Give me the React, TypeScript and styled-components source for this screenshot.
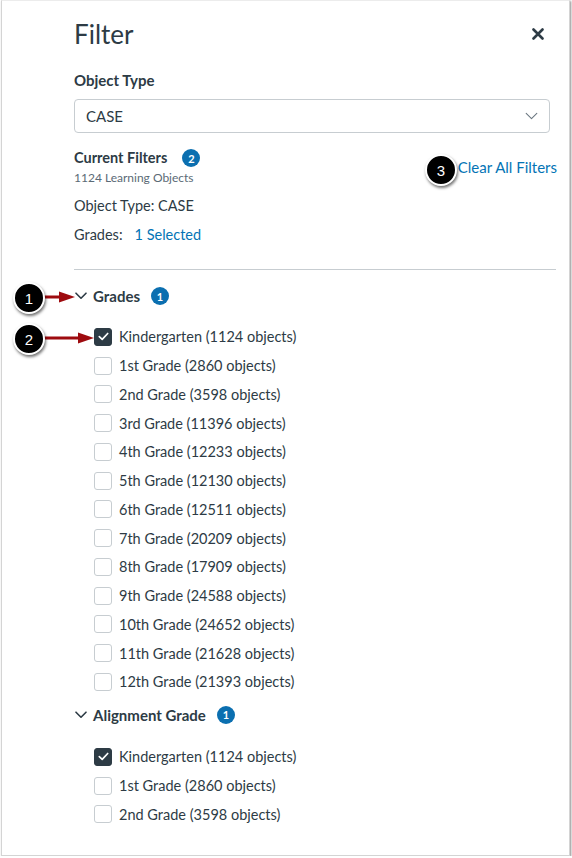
import React from "react";
import styled, { createGlobalStyle } from "styled-components";

const Global = createGlobalStyle`
  html, body { margin: 0; padding: 0; background: #ffffff; }
  body { font-family: Lato, "Open Sans", "Liberation Sans", sans-serif; color: #2d3b45; }
  * { box-sizing: border-box; }
`;

const Frame = styled.div`
  position: relative;
  width: 569px;
  height: 856px;
  margin-left: 1px;
  background: #fff;
  border: 1px solid #d4d4d4;
  border-top-color: #ececec;
  box-shadow: 1px 1px 2px rgba(0, 0, 0, 0.45);
  overflow: hidden;
`;

const Content = styled.div`
  padding: 0 13px 0 72px;
  display: flex;
  flex-direction: column;
`;

const Header = styled.div`
  height: 68px;
  display: flex;
  align-items: center;
  justify-content: space-between;
  padding-right: 11px;
`;

const Title = styled.h1`
  margin: -3px 0 0 0;
  font-size: 26px;
  font-weight: 400;
  line-height: 34px;
  color: #2d3b45;
`;

const CloseButton = styled.button`
  border: 0;
  background: none;
  padding: 0;
  width: 14px;
  height: 14px;
  margin-top: -2px;
  display: flex;
  align-items: center;
  justify-content: center;
  cursor: pointer;
`;

const Label = styled.div`
  font-size: 15px;
  font-weight: 700;
  line-height: 22px;
  height: 22px;
  margin-top: 0;
`;

const Select = styled.div`
  margin-top: 8px;
  margin-right: 6px;
  height: 34px;
  border: 1px solid #c7cdd1;
  border-radius: 4px;
  display: flex;
  align-items: center;
  justify-content: space-between;
  padding: 0 11px 0 11px;
  font-size: 15px;
`;

const FiltersRow = styled.div`
  margin-top: 15px;
  display: flex;
  justify-content: space-between;
  align-items: flex-start;
`;

const FiltersInfo = styled.div`
  display: flex;
  flex-direction: column;
`;

const HeadingLine = styled.div<{ $gap: number; $size?: number }>`
  display: flex;
  align-items: center;
  gap: ${(p) => p.$gap}px;
  font-weight: 700;
  font-size: ${(p) => p.$size ?? 15}px;
  line-height: 20px;
  height: 20px;
`;

const Badge = styled.span`
  width: 18px;
  height: 18px;
  border-radius: 50%;
  background: #0b6fb0;
  color: #fff;
  font-size: 11px;
  font-weight: 700;
  display: inline-flex;
  align-items: center;
  justify-content: center;
  line-height: 1;
`;

const SubText = styled.div`
  font-size: 12px;
  line-height: 16px;
  margin-top: 2px;
  color: #5b6a76;
`;

const InfoLine = styled.div<{ $mt: number }>`
  font-size: 14.5px;
  line-height: 20px;
  margin-top: ${(p) => p.$mt}px;
  display: flex;
  gap: 12px;
`;

const Link = styled.a`
  color: #0374b5;
  text-decoration: none;
  cursor: pointer;
`;

const ClearLink = styled(Link)`
  font-size: 15px;
  line-height: 20px;
  margin-top: 9px;
  margin-right: -1px;
`;

const Divider = styled.hr`
  margin: 24px 0 0 0;
  border: 0;
  border-top: 1px solid #c7cdd1;
  height: 0;
`;

const GroupHeader = styled.div<{ $mt: number }>`
  display: flex;
  align-items: center;
  height: 24px;
  margin-top: ${(p) => p.$mt}px;
  padding-left: 1px;
`;

const GroupTitle = styled.span`
  font-size: 15px;
  font-weight: 700;
  margin-left: 6px;
  margin-right: 11px;
`;

const List = styled.div<{ $mt: number }>`
  margin-top: ${(p) => p.$mt}px;
  padding-left: 20px;
  display: flex;
  flex-direction: column;
`;

const Row = styled.label`
  height: 28.75px;
  display: flex;
  align-items: center;
  gap: 7px;
  font-size: 14.5px;
`;

const Box = styled.span<{ $checked?: boolean }>`
  width: 18px;
  height: 18px;
  border-radius: 3px;
  border: 1px solid ${(p) => (p.$checked ? "#2d3b45" : "#c7cdd1")};
  background: ${(p) => (p.$checked ? "#2d3b45" : "#fff")};
  display: inline-flex;
  align-items: center;
  justify-content: center;
  flex: none;
`;

const Callout = styled.div<{ $x: number; $y: number }>`
  position: absolute;
  left: ${(p) => p.$x - 16}px;
  top: ${(p) => p.$y - 16}px;
  width: 32px;
  height: 32px;
  border-radius: 50%;
  background: #000;
  border: 2px solid #fff;
  box-shadow: 1px 2px 3px rgba(0, 0, 0, 0.55);
  color: #fff;
  font-family: "Liberation Sans", Arial, sans-serif;
  font-size: 15px;
  display: flex;
  align-items: center;
  justify-content: center;
`;

const Arrow = styled.svg<{ $x: number; $y: number }>`
  position: absolute;
  left: ${(p) => p.$x}px;
  top: ${(p) => p.$y - 7}px;
`;

const Chevron = ({ color = "#2d3b45", w = 12, sw = 1.6 }: { color?: string; w?: number; sw?: number }) => (
  <svg width={w} height={w / 2 + 2} viewBox="0 0 12 8">
    <path d="M1 1.2 L6 6.2 L11 1.2" fill="none" stroke={color} strokeWidth={sw} strokeLinecap="round" strokeLinejoin="round" />
  </svg>
);

const Check = () => (
  <svg width="11" height="9" viewBox="0 0 11 9">
    <path d="M1.3 4.6 L4.2 7.3 L9.7 1.5" fill="none" stroke="#fff" strokeWidth="1.7" strokeLinecap="round" strokeLinejoin="round" />
  </svg>
);

const grades = [
  ["Kindergarten", 1124],
  ["1st Grade", 2860],
  ["2nd Grade", 3598],
  ["3rd Grade", 11396],
  ["4th Grade", 12233],
  ["5th Grade", 12130],
  ["6th Grade", 12511],
  ["7th Grade", 20209],
  ["8th Grade", 17909],
  ["9th Grade", 24588],
  ["10th Grade", 24652],
  ["11th Grade", 21628],
  ["12th Grade", 21393],
] as const;

const CheckRow = ({ name, count, checked }: { name: string; count: number; checked?: boolean }) => (
  <Row>
    <Box $checked={checked}>{checked && <Check />}</Box>
    <span>
      {name} ({count} objects)
    </span>
  </Row>
);

const RedArrow = ({ x, y, len }: { x: number; y: number; len: number }) => (
  <Arrow $x={x} $y={y} width={len} height="14" viewBox={`0 0 ${len} 14`}>
    <path d={`M0 7 H${len - 14}`} stroke="#9e0b0f" strokeWidth="3" />
    <path d={`M${len - 16} 1.5 L${len} 7 L${len - 16} 12.5 Z`} fill="#9e0b0f" />
  </Arrow>
);

export default function App() {
  return (
    <>
      <Global />
      <Frame>
        <Content>
          <Header>
            <Title>Filter</Title>
            <CloseButton aria-label="Close">
              <svg width="12" height="12" viewBox="0 0 12 12">
                <path d="M1.5 1.5 L10.5 10.5 M10.5 1.5 L1.5 10.5" stroke="#2d3b45" strokeWidth="2.6" strokeLinecap="round" />
              </svg>
            </CloseButton>
          </Header>
          <Label>Object Type</Label>
          <Select>
            <span>CASE</span>
            <Chevron color="#6b7780" w={13} sw={1} />
          </Select>
          <FiltersRow>
            <FiltersInfo>
              <HeadingLine $gap={15} $size={14.5}>
                Current Filters <Badge>2</Badge>
              </HeadingLine>
              <SubText>1124 Learning Objects</SubText>
              <InfoLine $mt={10}>Object Type: CASE</InfoLine>
              <InfoLine $mt={9}>
                <span>Grades:</span>
                <Link>1 Selected</Link>
              </InfoLine>
            </FiltersInfo>
            <ClearLink>Clear All Filters</ClearLink>
          </FiltersRow>
          <Divider />
          <GroupHeader $mt={14}>
            <Chevron />
            <GroupTitle>Grades</GroupTitle>
            <Badge>1</Badge>
          </GroupHeader>
          <List $mt={14.6}>
            {grades.map(([n, c], i) => (
              <CheckRow key={n} name={n} count={c} checked={i === 0} />
            ))}
          </List>
          <GroupHeader $mt={6.6}>
            <Chevron />
            <GroupTitle>Alignment Grade</GroupTitle>
            <Badge>1</Badge>
          </GroupHeader>
          <List $mt={15.6}>
            {grades.slice(0, 3).map(([n, c], i) => (
              <CheckRow key={n} name={n} count={c} checked={i === 0} />
            ))}
          </List>
        </Content>
        <RedArrow x={41} y={296} len={32} />
        <RedArrow x={41} y={337} len={51} />
        <Callout $x={27} $y={297}>1</Callout>
        <Callout $x={27} $y={338}>2</Callout>
        <Callout $x={439} $y={169}>3</Callout>
      </Frame>
    </>
  );
}
